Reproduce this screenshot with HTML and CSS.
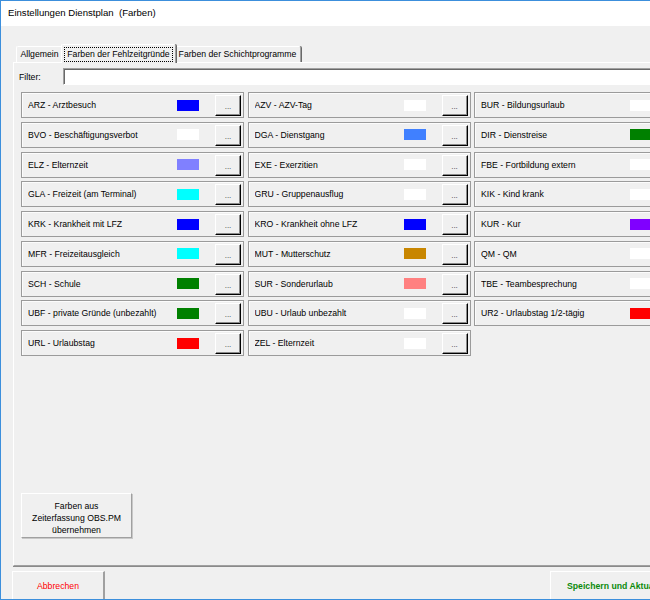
FILE: index.html
```html
<!DOCTYPE html>
<html lang="de">
<head>
<meta charset="utf-8">
<title>Einstellungen Dienstplan (Farben)</title>
<link rel="stylesheet" href="styles.css">
</head>
<body>
<div class="window">
  <div class="titlebar">Einstellungen Dienstplan&nbsp; (Farben)</div>
  <div class="client">
    <div class="tabs">
      <div class="tab tab-general">Allgemein</div>
      <div class="tab tab-absence active"><span class="focus">Farben der Fehlzeitgründe</span></div>
      <div class="tab tab-shift">Farben der Schichtprogramme</div>
    </div>
    <div class="panel">
      <div class="filter">
        <label class="filter-label">Filter:</label>
        <input class="filter-input" type="text">
      </div>
      <div class="grid">
        <div class="item"><span class="name">ARZ - Arztbesuch</span><span class="swatch c-blue"></span><span class="dots">...</span></div>
        <div class="item"><span class="name">AZV - AZV-Tag</span><span class="swatch c-white"></span><span class="dots">...</span></div>
        <div class="item"><span class="name">BUR - Bildungsurlaub</span><span class="swatch c-white"></span><span class="dots">...</span></div>

        <div class="item"><span class="name">BVO - Beschäftigungsverbot</span><span class="swatch c-white"></span><span class="dots">...</span></div>
        <div class="item"><span class="name">DGA - Dienstgang</span><span class="swatch c-skyblue"></span><span class="dots">...</span></div>
        <div class="item"><span class="name">DIR - Dienstreise</span><span class="swatch c-green"></span><span class="dots">...</span></div>

        <div class="item"><span class="name">ELZ - Elternzeit</span><span class="swatch c-lavender"></span><span class="dots">...</span></div>
        <div class="item"><span class="name">EXE - Exerzitien</span><span class="swatch c-white"></span><span class="dots">...</span></div>
        <div class="item"><span class="name">FBE - Fortbildung extern</span><span class="swatch c-white"></span><span class="dots">...</span></div>

        <div class="item"><span class="name">GLA - Freizeit (am Terminal)</span><span class="swatch c-cyan"></span><span class="dots">...</span></div>
        <div class="item"><span class="name">GRU - Gruppenausflug</span><span class="swatch c-white"></span><span class="dots">...</span></div>
        <div class="item"><span class="name">KIK - Kind krank</span><span class="swatch c-white"></span><span class="dots">...</span></div>

        <div class="item"><span class="name">KRK - Krankheit mit LFZ</span><span class="swatch c-blue"></span><span class="dots">...</span></div>
        <div class="item"><span class="name">KRO - Krankheit ohne LFZ</span><span class="swatch c-blue"></span><span class="dots">...</span></div>
        <div class="item"><span class="name">KUR - Kur</span><span class="swatch c-violet"></span><span class="dots">...</span></div>

        <div class="item"><span class="name">MFR - Freizeitausgleich</span><span class="swatch c-cyan"></span><span class="dots">...</span></div>
        <div class="item"><span class="name">MUT - Mutterschutz</span><span class="swatch c-ochre"></span><span class="dots">...</span></div>
        <div class="item"><span class="name">QM - QM</span><span class="swatch c-white"></span><span class="dots">...</span></div>

        <div class="item"><span class="name">SCH - Schule</span><span class="swatch c-green"></span><span class="dots">...</span></div>
        <div class="item"><span class="name">SUR - Sonderurlaub</span><span class="swatch c-salmon"></span><span class="dots">...</span></div>
        <div class="item"><span class="name">TBE - Teambesprechung</span><span class="swatch c-white"></span><span class="dots">...</span></div>

        <div class="item"><span class="name">UBF - private Gründe (unbezahlt)</span><span class="swatch c-green"></span><span class="dots">...</span></div>
        <div class="item"><span class="name">UBU - Urlaub unbezahlt</span><span class="swatch c-white"></span><span class="dots">...</span></div>
        <div class="item"><span class="name">UR2 - Urlaubstag 1/2-tägig</span><span class="swatch c-red"></span><span class="dots">...</span></div>

        <div class="item"><span class="name">URL - Urlaubstag</span><span class="swatch c-red"></span><span class="dots">...</span></div>
        <div class="item"><span class="name">ZEL - Elternzeit</span><span class="swatch c-white"></span><span class="dots">...</span></div>
      </div>
      <div class="import">Farben aus<br>Zeiterfassung OBS.PM<br>übernehmen</div>
    </div>
    <div class="footer">
      <div class="btn btn-cancel">Abbrechen</div>
      <div class="btn btn-save">Speichern und Aktualisieren</div>
    </div>
  </div>
</div>
</body>
</html>
```
FILE: styles.css
```css
html, body {
  margin: 0;
  padding: 0;
}
body {
  width: 650px;
  height: 600px;
  overflow: hidden;
  background: #f0f0f0;
  font-family: "Liberation Sans", Arial, sans-serif;
  font-size: 8.7px;
  color: #000;
}
.window {
  width: 700px;
  height: 600px;
  box-sizing: border-box;
  border: 1px solid #3c8fdc;
  display: flex;
  flex-direction: column;
  background: #f0f0f0;
}
.titlebar {
  flex: none;
  height: 25px;
  background: #fff;
  padding-left: 7px;
  font-size: 9.6px;
  line-height: 24px;
  color: #000;
  white-space: pre;
}
.client {
  flex: 1;
  display: flex;
  flex-direction: column;
  min-height: 0;
}
.tabs {
  flex: none;
  height: 36px;
  box-sizing: border-box;
  display: flex;
  align-items: flex-end;
  padding-left: 15px;
  position: relative;
  z-index: 1;
}
.tab {
  box-sizing: border-box;
  height: 16px;
  line-height: 15px;
  text-align: center;
  white-space: nowrap;
  border-top: 1px solid #fff;
  border-left: 1px solid #fff;
  border-right: 1px solid #a0a0a0;
  box-shadow: 1px 0 0 #696969;
  border-radius: 2px 2px 0 0;
  background: #f0f0f0;
}
.tab-general { width: 47px; }
.tab-absence { width: 115px; }
.tab-shift { width: 127px; }
.tab.active {
  height: 19px;
  margin: 0 -2px -1px;
  position: relative;
  padding-top: 2px;
  line-height: 13px;
}
.focus {
  display: inline-block;
  padding: 0 2px;
  border: 1px dotted #000;
  line-height: 13px;
}
.panel {
  flex: none;
  height: 504px;
  box-sizing: border-box;
  margin-left: 12px;
  border-top: 1px solid #fff;
  border-left: 1px solid #fff;
  border-bottom: 1px solid #a0a0a0;
  border-right: 1px solid #a0a0a0;
  box-shadow: 0 1px 0 #8a8a8a;
  display: flex;
  flex-direction: column;
}
.filter {
  display: flex;
  align-items: center;
  height: 17px;
  margin: 5px 0 0 5px;
}
.filter-label {
  width: 44px;
  flex: none;
}
.filter-input {
  flex: 1;
  height: 17px;
  box-sizing: border-box;
  margin: 0;
  padding: 0;
  border: 1px solid;
  border-color: #a0a0a0 #fff #fff #a0a0a0;
  box-shadow: inset 1px 1px 0 #696969;
  background: #fff;
  outline: none;
}
.grid {
  display: grid;
  grid-template-columns: repeat(3, 223px);
  column-gap: 3.5px;
  row-gap: 3.75px;
  margin: 7px 0 0 7px;
}
.item {
  box-sizing: border-box;
  height: 26px;
  display: flex;
  align-items: center;
  padding-left: 6px;
  border: 1px solid #9b9b9b;
  box-shadow: inset 1px 1px 0 #fcfcfc;
}
.name {
  flex: 1;
  min-width: 0;
  white-space: nowrap;
  overflow: hidden;
}
.swatch {
  flex: none;
  width: 22px;
  height: 11px;
  margin-right: 16px;
}
.dots {
  flex: none;
  box-sizing: border-box;
  width: 26px;
  height: 21px;
  margin-right: 2px;
  margin-top: 1px;
  border: 1px solid;
  border-color: #fff #000 #000 #fff;
  box-shadow: inset -1px -1px 0 #8a8a8a;
  text-align: center;
  line-height: 21px;
  font-size: 8px;
  color: #333;
  background: #f0f0f0;
}
.c-white { background: #ffffff; }
.c-blue { background: #0000ff; }
.c-skyblue { background: #4080ff; }
.c-green { background: #008000; }
.c-lavender { background: #8080ff; }
.c-cyan { background: #00ffff; }
.c-violet { background: #8000ff; }
.c-ochre { background: #c88600; }
.c-salmon { background: #ff8080; }
.c-red { background: #ff0000; }
.import {
  box-sizing: border-box;
  width: 111px;
  height: 45px;
  margin: auto 0 27px 7px;
  padding-top: 6px;
  text-align: center;
  line-height: 12px;
  border: 1px solid;
  border-color: #fff #a0a0a0 #a0a0a0 #fff;
  box-shadow: 1px 1px 0 #c8c8c8;
  background: #f0f0f0;
}
.footer {
  flex: 1;
  min-height: 0;
  display: flex;
  padding-top: 5px;
  overflow: hidden;
}
.btn {
  box-sizing: border-box;
  height: 30px;
  line-height: 28px;
  border-top: 1px solid #fff;
  border-left: 1px solid #fff;
  border-right: 2px solid #a0a0a0;
  background: #f0f0f0;
  white-space: nowrap;
}
.btn-cancel {
  width: 93px;
  margin-left: 11px;
  text-align: center;
  color: #ff0000;
}
.btn-save {
  width: 138px;
  margin-left: auto;
  margin-right: 11px;
  padding-left: 16px;
  color: #0a8a0a;
  font-weight: bold;
}
```
